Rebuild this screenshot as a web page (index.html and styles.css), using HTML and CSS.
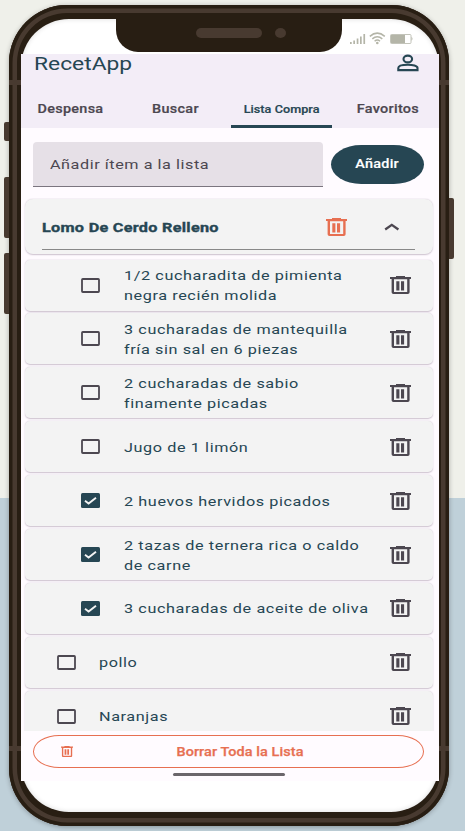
FILE: index.html
```html
<!DOCTYPE html>
<html lang="es">
<head>
<meta charset="utf-8">
<title>RecetApp</title>
<link rel="stylesheet" href="styles.css">
</head>
<body>
<svg class="defs" width="0" height="0">
  <symbol id="trash" viewBox="0 0 21 18" preserveAspectRatio="none">
    <path fill="currentColor" fill-rule="evenodd" d="M0 .9h6V0h9v.9h6V3h-1.400v13.200q0 1.800-1.800 1.800H3.400q-1.800 0-1.800-1.800V3H0zM4 3.200v12.900h13.200V3.200zM6.300 5.200h3.100v9.200H6.300zM11 5.200h3.100v9.200H11z"/>
  </symbol>
  <symbol id="box" viewBox="0 0 19 15">
    <rect x="1" y="1" width="17" height="13" rx=".8" fill="none" stroke="#4c4750" stroke-width="1.800"/>
  </symbol>
  <symbol id="checked" viewBox="0 0 19 15">
    <rect width="19" height="15" rx="1.500" fill="#264653"/>
    <path d="M4 7.800 7.600 10.600 15 4.700" fill="none" stroke="#f3f3f3" stroke-width="1.900"/>
  </symbol>
</svg>
<div class="phone">
  <i class="key mute"></i><i class="key up"></i><i class="key down"></i><i class="key power"></i>
  <i class="band tl"></i><i class="band tr"></i><i class="band bl"></i><i class="band br"></i>
  <div class="screen">
    <div class="status">
      <div class="notch"><i class="speaker"></i><i class="camera"></i></div>
      <svg class="signals" width="64" height="14" viewBox="0 0 64 14">
        <g fill="#b4b5a8">
          <path d="M0 10h1.700v2H0zM3.300 8.500H5v3.500H3.300zM6.700 6.500h1.700V12H6.700zM10 4.500h1.700V12H10zM13.400 2h1.700v10h-1.700z"/>
          <circle cx="27.300" cy="11" r="1.300"/>
          <path d="M41 3h14v8H41z"/>
          <path d="M61.500 4.700q2 1.800 0 4z"/>
        </g>
        <g fill="none" stroke="#b4b5a8">
          <path stroke-width="1.500" d="M19.800 4.400q7.500-6.500 15 0M22.300 6.900q5-4.300 10 0M24.600 9.200q2.700-2.300 5.400 0"/>
          <rect x="40.500" y="2.500" width="20.500" height="9" rx="1" stroke-width=".8"/>
        </g>
      </svg>
    </div>
    <div class="app">
      <header class="bar">
        <span class="t title">RecetApp</span>
        <svg class="user" width="22" height="18" viewBox="0 0 22 18"><g fill="none" stroke="#264653" stroke-width="2.100"><ellipse cx="10.800" cy="5" rx="4.300" ry="3.400"/><path d="M1.300 16.100v-2.200c0-4.300 19.200-4.300 19.200 0v2.200z"/></g></svg>
      </header>
      <nav class="tabs">
        <span class="tab"><b class="t">Despensa</b></span>
        <span class="tab"><b class="t">Buscar</b></span>
        <span class="tab active"><b class="t small">Lista Compra</b></span>
        <span class="tab"><b class="t">Favoritos</b></span>
      </nav>
      <div class="add">
        <div class="field"><span class="t hint">Añadir ítem a la lista</span></div>
        <div class="btn"><span class="t">Añadir</span></div>
      </div>
      <main class="list">
        <section class="card group">
          <div class="grouprow">
            <b class="t name">Lomo De Cerdo Relleno</b>
            <svg class="gtrash" width="21" height="18"><use href="#trash"/></svg>
            <svg class="chev" width="16" height="8" viewBox="0 0 16 8"><path d="M1.200 6.500 7.800 1.800l6.600 4.700" fill="none" stroke="#4c4750" stroke-width="2.300"/></svg>
          </div>
        </section>
        <div class="card item"><svg class="cb" width="19" height="15"><use href="#box"/></svg><p class="t">1/2 cucharadita de pimienta<br>negra recién molida</p><svg class="del" width="21" height="18"><use href="#trash"/></svg></div>
        <div class="card item"><svg class="cb" width="19" height="15"><use href="#box"/></svg><p class="t">3 cucharadas de mantequilla<br>fría sin sal en 6 piezas</p><svg class="del" width="21" height="18"><use href="#trash"/></svg></div>
        <div class="card item"><svg class="cb" width="19" height="15"><use href="#box"/></svg><p class="t">2 cucharadas de sabio<br>finamente picadas</p><svg class="del" width="21" height="18"><use href="#trash"/></svg></div>
        <div class="card item"><svg class="cb" width="19" height="15"><use href="#box"/></svg><p class="t">Jugo de 1 limón</p><svg class="del" width="21" height="18"><use href="#trash"/></svg></div>
        <div class="card item"><svg class="cb" width="19" height="15"><use href="#checked"/></svg><p class="t">2 huevos hervidos picados</p><svg class="del" width="21" height="18"><use href="#trash"/></svg></div>
        <div class="card item"><svg class="cb" width="19" height="15"><use href="#checked"/></svg><p class="t">2 tazas de ternera rica o caldo<br>de carne</p><svg class="del" width="21" height="18"><use href="#trash"/></svg></div>
        <div class="card item"><svg class="cb" width="19" height="15"><use href="#checked"/></svg><p class="t">3 cucharadas de aceite de oliva</p><svg class="del" width="21" height="18"><use href="#trash"/></svg></div>
        <div class="card item top"><svg class="cb" width="19" height="15"><use href="#box"/></svg><p class="t">pollo</p><svg class="del" width="21" height="18"><use href="#trash"/></svg></div>
        <div class="card item top"><svg class="cb" width="19" height="15"><use href="#box"/></svg><p class="t">Naranjas</p><svg class="del" width="21" height="18"><use href="#trash"/></svg></div>
      </main>
      <div class="clear"><svg width="12" height="11"><use href="#trash"/></svg><span class="t">Borrar Toda la Lista</span></div>
      <div class="home"></div>
    </div>
  </div>
</div>
</body>
</html>
```
FILE: styles.css
```css
* { box-sizing: border-box; }
html { background: #fff; }
body {
  margin: 0;
  width: 465px;
  height: 831px;
  padding: 5px 0 0 9px;
  overflow: hidden;
  background: linear-gradient(#eff0ea 498px, #bfd0d9 498px);
  font-family: Roboto, "Liberation Sans", sans-serif;
  color: #264653;
}
.defs { position: absolute; }
svg { display: block; flex: none; }
.phone {
  position: relative;
  width: 440px;
  height: 821px;
  padding: 13.5px 10px 14px 12px;
  border-radius: 58px;
  background: #281e13;
  box-shadow: inset 0 0 0 3.5px #281e13, inset 0 0 0 8px #483a30, 0 1px 5px rgba(0, 0, 0, .3);
}
.key { position: absolute; left: -5px; width: 5px; background: #483a30; border-radius: 2px 0 0 2px; }
.mute { top: 117px; height: 19px; }
.up { top: 172px; height: 61px; }
.down { top: 248px; height: 61px; }
.power { left: 440px; top: 193px; height: 61px; border-radius: 0 2px 2px 0; }
.band { position: absolute; width: 12px; height: 5px; background: #483a30; }
.tl { left: 0; top: 75px; }
.tr { right: 0; top: 75px; width: 10px; }
.bl { left: 0; top: 741px; }
.br { right: 0; top: 741px; width: 10px; }
.screen { height: 793.5px; border-radius: 48px; background: #fff; box-shadow: inset 0 0 5px rgba(0, 0, 0, .15); }
.status { display: flex; height: 35.5px; padding-left: 95px; }
.notch {
  display: flex;
  gap: 13px;
  width: 226px;
  height: 33.5px;
  padding: 9.5px 0 0 80px;
  background: #281e13;
  border-radius: 0 0 22px 22px;
}
.speaker { width: 66px; height: 10px; border-radius: 5px; background: #483a30; }
.camera { width: 11px; height: 10px; border-radius: 50%; background: #483a30; }
.signals { margin: 13px 0 0 8px; }
.app { height: 727px; background: #fffbff; overflow: hidden; }
.t { display: block; white-space: nowrap; transform: scaleX(1.2); transform-origin: left center; }
.bar { display: flex; justify-content: space-between; height: 36px; padding: 0 20px 0 12.5px; background: #f3edf7; }
.title { height: 21px; font-size: 17.700px; line-height: 21px; transform: scaleX(1.290); }
.tabs { display: grid; grid-template-columns: 99px 110px 105px 105px; height: 38px; background: #f3edf7; }
.tab { display: flex; justify-content: center; padding-top: 11px; font-size: 12px; line-height: 17px; color: #4c4750; }
.tab .t, .btn .t, .clear .t { transform-origin: center; font-weight: 500; letter-spacing: .25px; }
.tab .t { -webkit-text-stroke: .2px; }
.tab .small { font-size: 10.500px; letter-spacing: .05px; }
.active { color: #264653; border-bottom: 3px solid #264653; width: 101px; margin-left: 1px; border-radius: 2px 2px 0 0; }
.add { display: flex; gap: 8px; height: 70px; padding: 13.500px 15px 0 12px; }
.field { width: 290px; height: 45px; padding: 12px 17px; background: #e6e0e7; border-radius: 4px 4px 0 0; border-bottom: 1px solid #7b757f; }
.hint { font-size: 13.500px; line-height: 20px; letter-spacing: .46px; color: #4c4750; }
.btn { display: flex; align-items: center; justify-content: center; width: 93px; height: 39px; margin-top: 3px; border-radius: 31px / 20px; background: #264653; color: #fff; font-size: 12px; }
.btn .t { letter-spacing: .2px; -webkit-text-stroke: .15px; }
.list { height: 533px; padding: .6px 6px 0 3.5px; overflow: hidden; }
.card { background: #f3f3f3; border-radius: 5px; box-shadow: 0 .6px 1.500px rgba(70, 40, 75, .28); }
.group { height: 55px; margin-bottom: 6px; padding: 0 18px 0 17.5px; border-radius: 8px; }
.grouprow { display: flex; align-items: center; height: 51px; padding-top: 7px; border-bottom: 1px solid #888; }
.name { width: 284px; font-size: 13px; font-weight: 700; letter-spacing: .22px; -webkit-text-stroke: .35px; transform: scaleX(1.250); }
.gtrash { color: #e76f51; }
.chev { margin-left: 37px; }
.item { display: flex; align-items: center; height: 51px; margin-bottom: 2.9px; padding: 0 22px 0 56.4px; }
.item .t { margin: 0 0 0 24px; font-size: 13.500px; line-height: 20px; letter-spacing: .5px; }
.item .del { margin-left: auto; color: #4c4750; }
.item.top { padding-left: 32px; }
.item.top .t { margin-left: 23.4px; }
.clear { display: flex; align-items: center; height: 33px; margin: 4px 15px 0 12px; border: 1px solid #e76f51; border-radius: 27px / 17px; color: #e76f51; font-size: 12px; }
.clear svg { margin-left: 27px; }
.clear .t { width: 128px; margin-left: 103px; text-align: center; letter-spacing: .08px; -webkit-text-stroke: .25px; }
.home { width: 112px; height: 3px; margin: 5px 0 0 151.5px; border-radius: 2px; background: #6b666b; }
```
